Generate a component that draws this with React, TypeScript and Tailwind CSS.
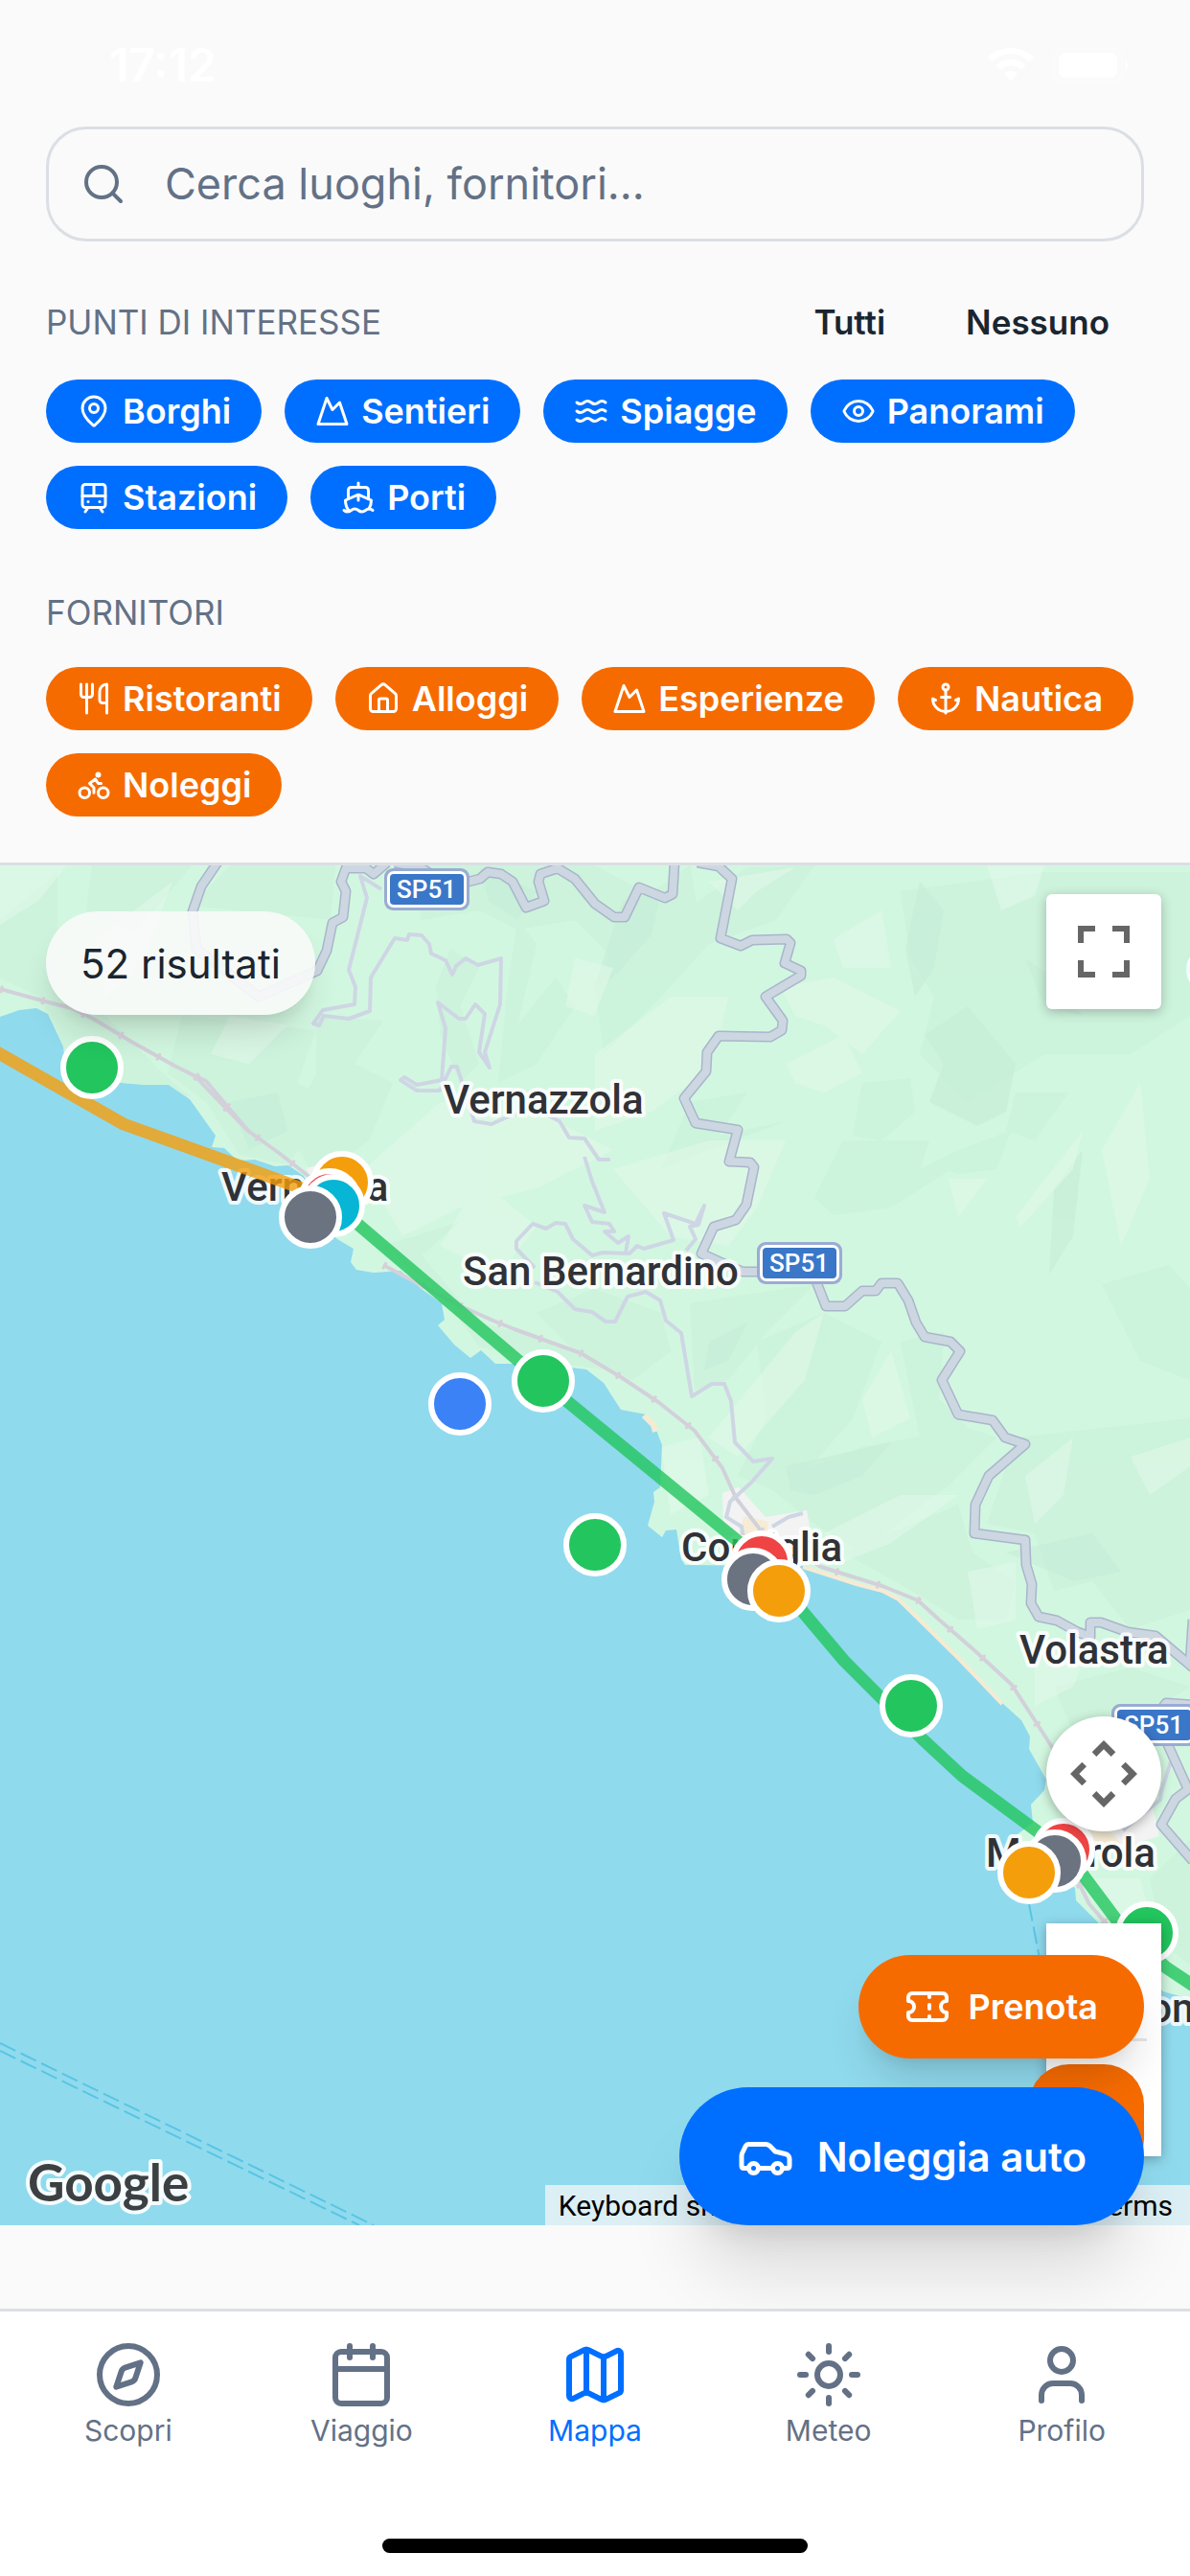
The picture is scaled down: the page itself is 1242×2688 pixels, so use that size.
import type { ReactNode } from "react";
import {
  Anchor, Bike, Calendar, Car, Compass, Eye, House, Map as MapIcon, MapPin, Mountain,
  Search, Ship, Sun, Ticket, TramFront, User, Utensils, Waves, type LucideIcon,
} from "lucide-react";

type Chip = { label: string; Icon: LucideIcon };

const interests: Chip[] = [
  { label: "Borghi", Icon: MapPin },
  { label: "Sentieri", Icon: Mountain },
  { label: "Spiagge", Icon: Waves },
  { label: "Panorami", Icon: Eye },
  { label: "Stazioni", Icon: TramFront },
  { label: "Porti", Icon: Ship },
];

const suppliers: Chip[] = [
  { label: "Ristoranti", Icon: Utensils },
  { label: "Alloggi", Icon: House },
  { label: "Esperienze", Icon: Mountain },
  { label: "Nautica", Icon: Anchor },
  { label: "Noleggi", Icon: Bike },
];

const tabs: (Chip & { active?: boolean })[] = [
  { label: "Scopri", Icon: Compass },
  { label: "Viaggio", Icon: Calendar },
  { label: "Mappa", Icon: MapIcon, active: true },
  { label: "Meteo", Icon: Sun },
  { label: "Profilo", Icon: User },
];

/* Pins on the map canvas, in canvas pixels, back to front. */
const pins: { name: string; x: number; y: number; color: string }[] = [
  { name: "Sentiero Monterosso", x: 96, y: 211, color: "bg-[#22c55e]" },
  { name: "Panorama Vernazza", x: 357, y: 331, color: "bg-[#f59e0b]" },
  { name: "Borgo Vernazza", x: 344, y: 349, color: "bg-[#ef4444]" },
  { name: "Porto Vernazza", x: 348, y: 355, color: "bg-[#06b6d4]" },
  { name: "Stazione Vernazza", x: 324, y: 367, color: "bg-[#6b7280]" },
  { name: "Sentiero Corniglia", x: 567, y: 538, color: "bg-[#22c55e]" },
  { name: "Spiaggia Guvano", x: 480, y: 562, color: "bg-[#3b82f6]" },
  { name: "Sentiero mare", x: 621, y: 709, color: "bg-[#22c55e]" },
  { name: "Borgo Corniglia", x: 795, y: 727, color: "bg-[#ef4444]" },
  { name: "Stazione Corniglia", x: 786, y: 745, color: "bg-[#6b7280]" },
  { name: "Panorama Corniglia", x: 813, y: 757, color: "bg-[#f59e0b]" },
  { name: "Sentiero Manarola", x: 951, y: 877, color: "bg-[#22c55e]" },
  { name: "Borgo Manarola", x: 1110, y: 1027, color: "bg-[#ef4444]" },
  { name: "Stazione Manarola", x: 1101, y: 1039, color: "bg-[#6b7280]" },
  { name: "Panorama Manarola", x: 1074, y: 1051, color: "bg-[#f59e0b]" },
  { name: "Via dell'Amore", x: 1197, y: 1114, color: "bg-[#22c55e]" },
];

const land =
  "0,1061 20,1054 38,1052 50,1058 66,1092 70,1122 100,1130 127,1130 150,1132 176,1132 198,1147 225,1185 221,1197 234,1198 248,1211 266,1210 287,1217 301,1216 317,1227 330,1250 340,1280 352,1293 369,1303 366,1317 372,1325 390,1328 418,1326 440,1345 461,1360 464,1377 457,1383 474,1403 491,1417 502,1409 517,1423 537,1423 596,1427 612,1429 630,1443 648,1471 675,1476 683,1487 691,1508 689,1552 682,1557 683,1567 676,1592 691,1604 695,1597 706,1596 711,1627 715,1633 838,1634 894,1652 921,1659 938,1668 1001,1730 1046,1777 1066,1795 1075,1812 1074,1825 1092,1857 1090,1868 1076,1883 1078,1902 1062,1914 1050,1926 1070,1945 1100,1955 1122,1970 1123,1983 1143,2003 1157,2017 1185,2050 1214,2078 1242,2086 1242,903 0,903";

const darkSlopes = [
  "0,960 60,910 60,1040 110,1060 170,1120 200,1145 150,1132 70,1126 60,1075 40,1040 0,1020",
  "96,903 200,903 140,975 90,950",
  "240,903 350,903 345,960 250,950 200,945",
  "190,1060 330,1075 310,1130 350,1150 300,1215 250,1205 215,1150 175,1120",
  "330,1060 400,1065 370,1110 410,1130 385,1190 330,1230 300,1180 330,1120",
  "430,903 621,903 690,940 640,1000 600,960 540,970 500,950 440,960",
  "470,990 500,1010 480,1050 500,1110 480,1130 460,1080 455,1030",
  "540,960 560,985 540,1070 580,1020 600,1050 560,1110 520,1130 530,1030",
  "400,1300 480,1275 440,1310 500,1380 560,1395 640,1430 560,1420 500,1405 460,1350",
  "621,1030 700,960 780,905 850,903 810,960 740,985 690,1040 630,1100",
  "640,960 720,903 730,960 660,1050 630,1030",
  "720,1150 780,1140 750,1185 820,1170 740,1200 690,1220",
  "900,1130 950,1125 955,1160 920,1190 890,1185",
  "940,930 1090,910 1242,910 1242,1060 1180,1100 1090,1100 1010,1150 960,1100 975,1040 950,1000",
  "880,1190 970,1190 960,1220 1000,1200 1055,1180 1040,1220 1000,1225 990,1222 930,1260 870,1268 850,1250",
  "1060,1140 1115,1140 1080,1190 1050,1180",
  "560,1370 620,1345 690,1370 700,1410 660,1440 600,1410",
  "720,1360 850,1340 800,1390 760,1440 725,1450",
  "790,1400 860,1370 920,1400 890,1480 820,1560 770,1540 800,1480",
  "800,1550 900,1510 1010,1490 1040,1500 990,1550 950,1580 900,1620 850,1590",
  "1060,1500 1242,1480 1242,1680 1180,1700 1140,1650 1100,1660 1080,1600 1030,1590",
  "940,1400 985,1390 980,1460 1010,1490 960,1500",
  "880,1620 1000,1570 1015,1620 1060,1650 1050,1690 1000,1690 960,1665",
  "1100,1760 1180,1740 1242,1760 1180,1800 1130,1830",
  "1200,1960 1242,1920 1242,2050 1215,2030",
  "1150,1340 1220,1320 1242,1345 1242,1440 1190,1420",
];

const deepSlopes = [
  "965,1080 1010,1050 1060,1110 1050,1160 1020,1175 970,1150 985,1110",
  "650,940 690,930 680,975 640,1020 620,1030",
  "960,920 985,950 975,1010 955,1040 945,990",
  "820,1530 930,1505 900,1540 850,1560 825,1555",
  "1050,1620 1140,1600 1170,1640 1120,1650",
  "500,905 560,930 540,960 510,940",
  "240,1150 290,1140 300,1180 260,1200",
  "1070,1000 1100,1020 1130,1060 1090,1050",
  "1100,1240 1130,1200 1120,1290 1095,1330",
  "740,1400 780,1380 760,1420 735,1430",
];

const lightSlopes = [
  "0,903 70,903 40,940 0,965",
  "100,980 180,920 150,1000 110,1040",
  "621,1100 700,1040 760,1040 750,1085 735,1120 680,1160 621,1180",
  "380,1220 460,1150 560,1160 640,1200 560,1240 480,1260 420,1290",
  "500,1230 560,1280 520,1330 460,1300",
  "740,920 830,905 790,930 770,950",
  "815,1030 870,1020 940,1055 900,1100 860,1070 830,1060",
  "820,1110 880,1080 900,1120 860,1140 830,1130",
  "870,980 920,950 930,1010 880,1010",
  "1030,903 1090,903 1080,935 1045,950",
  "1060,1270 1130,1180 1120,1220 1065,1280",
  "990,1230 1030,1230 1000,1270",
  "640,1220 740,1190 820,1190 790,1260 760,1300 700,1290",
  "740,1500 830,1390 860,1370 840,1440 770,1520",
  "860,1600 940,1560 1000,1560 930,1610 880,1630",
  "900,1460 930,1410 950,1480 910,1500",
  "1070,1540 1120,1500 1110,1560 1080,1590",
  "1010,1640 1060,1630 1060,1690 1020,1700",
  "1080,1720 1140,1710 1120,1760 1080,1780",
  "1130,1960 1190,1960 1200,2000 1160,2010",
  "690,1510 730,1500 740,1560 700,1580",
  "240,1060 300,1070 260,1110 220,1100",
  "1150,1200 1190,1130 1200,1230 1170,1300",
  "600,1000 640,1010 620,1060 590,1050",
  "1180,1520 1242,1500 1242,1530 1200,1560",
];

const highways = [
  "227,900 210,925 201,951 205,990 270,1040 331,1013 341,992 347,963 358,957 361,930 356,920 361,906 382,906 390,912 404,900",
  "412,900 440,906 460,918 489,920 501,917 509,910 523,912 535,920 549,947 568,940 562,920 564,912 582,906 600,917 621,943 641,957 652,957 667,926 694,937 702,933 704,900",
  "728,900 750,904 764,917 752,979 773,987 785,981 821,980 825,984 819,1005 836,1013 836,1018 799,1040 817,1065 816,1075 804,1082 750,1081 738,1098 737,1118 714,1146 726,1172 770,1179 761,1212 783,1213 787,1218 779,1257 768,1273 745,1280 732,1308 752,1317 775,1327 850,1327 853,1340 862,1363 882,1363 900,1347 914,1347 920,1339 937,1339 948,1357 956,1380 965,1395 992,1400 1002,1410 983,1440 1000,1476 1036,1482 1049,1500 1070,1507 1032,1540 1018,1570 1017,1600 1070,1607 1071,1633 1077,1653 1076,1673 1084,1687 1103,1691 1125,1703 1138,1708 1138,1693 1149,1693 1177,1703 1206,1707 1245,1740",
  "1245,1690 1242,1735",
  "1200,1800 1217,1777 1245,1779",
  "1214,1810 1240,1867 1227,1877 1212,1904 1245,1942",
];

const lanes = [
  "398,928 376,914 383,937 364,1012 371,1030 370,1048 337,1054 327,1068 333,1070 338,1060 364,1063 386,1055 387,1020 412,979 425,981 427,975 440,976 448,985 450,995 465,1002 472,1017 476,1008 486,1000 499,1007 523,1000 522,1048 506,1098 511,1114 500,1098 506,1058 496,1048 486,1063 479,1063 457,1046 465,1073 461,1127 435,1132 422,1124 418,1127 435,1138 459,1138 471,1113 477,1113 495,1170 513,1173 535,1163 560,1158 584,1170 594,1187 610,1188 625,1210 637,1210",
  "610,1207 618,1233 631,1265 610,1258 618,1275 636,1277 641,1285 631,1285 645,1297 656,1290 653,1307",
  "558,1323 539,1303 539,1295 556,1277 570,1282 580,1276 590,1277 598,1293 618,1310 629,1307 657,1308 665,1300 672,1303 703,1294 693,1266 726,1277 735,1258 729,1278 720,1280 726,1293 716,1305",
  "558,1338 582,1348 600,1366 618,1369 632,1379 642,1379 655,1353 674,1348 689,1357 695,1378 711,1391 722,1457 743,1444 756,1444 763,1462 767,1505 786,1525 806,1522 784,1547 762,1567 758,1583 774,1593 776,1605",
  "806,1593 823,1583 838,1579",
  "1222,1838 1212,1870 1211,1878 1190,1895 1172,1910",
];

const railways = [
  "0,1032 51,1046 75,1052 97,1063 139,1088 182,1112 204,1123 218,1138 259,1180 291,1203 323,1228",
  "204,1123 215,1128 259,1180",
  "400,1320 479,1362 517,1379 537,1387 606,1412 648,1437 687,1463 725,1493 754,1532 768,1563 794,1597 857,1635 921,1655 958,1670 980,1690 1018,1723 1056,1758 1098,1823 1120,1860 1125,1920 1127,1967 1137,1987 1157,2010",
];

const places: [string, number, number][] = [
  ["Vernazzola", 463, 1162],
  ["Vernazza", 231, 1253],
  ["San Bernardino", 483, 1341],
  ["Corniglia", 711, 1629],
  ["Volastra", 1064, 1736],
  ["Manarola", 1029, 1948],
  ["Riomaggiore", 1162, 2110],
  ["G", 1240, 1027],
];

const shields: [number, number][] = [[401, 906], [790, 1296], [1160, 1778]];

function Lines({ set, stroke, width, dash }: { set: string[]; stroke: string; width: number; dash?: string }) {
  return (
    <g fill="none" stroke={stroke} strokeWidth={width} strokeLinejoin="round" strokeDasharray={dash}>
      {set.map((p) => <polyline key={p} points={p} />)}
    </g>
  );
}

function Terrain() {
  return (
    <svg className="absolute inset-0 h-full w-full" viewBox="0 903 1242 1419" aria-hidden="true">
      <defs>
        <clipPath id="land"><polygon points={land} /></clipPath>
      </defs>
      <rect x="0" y="903" width="1242" height="1419" fill="#90daee" />
      <polygon points={land} fill="#d2f7e1" />
      <g clipPath="url(#land)">
        <g fill="#c8f0d9" opacity="0.55">{darkSlopes.map((p) => <polygon key={p} points={p} />)}</g>
        <g fill="#c6edd7" opacity="0.6">{deepSlopes.map((p) => <polygon key={p} points={p} />)}</g>
        <g fill="#e2f9e9" opacity="0.6">{lightSlopes.map((p) => <polygon key={p} points={p} />)}</g>
      </g>
      <polyline points="838,1635 894,1653 921,1660 938,1669 1001,1731 1046,1778" fill="none" stroke="#f5ebd2" strokeWidth="4" />
      <polyline points="672,1477 682,1487 684,1494" fill="none" stroke="#f5ebd2" strokeWidth="6" />
      <polygon points="320,1219 334,1215 350,1232 326,1236" fill="#f3f2f2" />
      <polygon points="754,1558 771,1552 799,1583 842,1576 847,1606 773,1606 755,1590" fill="#f3f3f3" />
      <polygon points="776,1583 786,1584 802,1588 800,1606 770,1606" fill="#f6ecd6" />
      <polygon points="1137,1905 1203,1885 1210,1916 1176,1926 1140,1930" fill="#f3f3f3" />
      <polygon points="1137,1908 1160,1912 1170,1924 1145,1926" fill="#f6ecd6" />

      <Lines set={railways} stroke="#d2d1da" width={4} />
      <Lines set={railways} stroke="#d8cfda" width={8} dash="3 42" />
      <Lines set={lanes} stroke="#ced6e4" width={4} />
      <Lines set={highways} stroke="#a9b5cb" width={11} />
      <Lines set={highways} stroke="#cdd7e2" width={8} />

      <Lines set={["0,2132 390,2322", "0,2140 375,2322", "1074,1987 1100,2120"]} stroke="#58c5e3" width={2} dash="18 6" />

      <g fontFamily="Roboto, sans-serif" fontWeight="500">
        {shields.map(([x, y]) => (
          <g key={x}>
            <rect x={x} y={y} width="89" height="44" rx="9" fill="#9aacd2" />
            <rect x={x + 3} y={y + 3} width="83" height="38" rx="7" fill="#fff" />
            <rect x={x + 6} y={y + 6} width="77" height="32" rx="4" fill="#3a77c8" />
            <text x={x + 44} y={y + 31} textAnchor="middle" fontSize="26" fill="#fff">SP51</text>
          </g>
        ))}
        {places.map(([name, x, y]) => (
          <text key={name} x={x} y={y} fontSize="42" fill="#303237" stroke="#ffffff" strokeOpacity="0.85" strokeWidth="8" strokeLinejoin="round" paintOrder="stroke">
            {name}
          </text>
        ))}
      </g>

      <g fill="none" strokeWidth="13" strokeOpacity="0.8" strokeLinejoin="round">
        <polyline stroke="#f59e0b" points="-10,1094 129,1173 340,1249" />
        <polyline stroke="#22c55e" points="340,1249 566,1441 770,1608 805,1642 838,1682 881,1733 921,1773 963,1815 1004,1853 1084,1912 1115,1936 1168,2007 1217,2053 1250,2075" />
      </g>
    </svg>
  );
}

function Filters({ chips, tone }: { chips: Chip[]; tone: "blue" | "orange" }) {
  return (
    <div className="flex flex-wrap gap-6">
      {chips.map(({ label, Icon }) => (
        <button
          key={label}
          type="button"
          aria-pressed="true"
          className={`flex h-[66px] items-center gap-3 rounded-full px-8 text-[36px] leading-none font-semibold text-white ${tone === "blue" ? "bg-[#006fff]" : "bg-[#f66b00]"}`}
        >
          <Icon className="size-9" strokeWidth={2} aria-hidden="true" />
          {label}
        </button>
      ))}
    </div>
  );
}

function StatusBar() {
  return (
    <div className="flex h-[132px] items-center justify-between pt-1 pr-[63px] pl-[114px] text-white">
      <span className="text-[48px] leading-none font-semibold">17:12</span>
      <div className="flex items-center gap-5" aria-hidden="true">
        <svg className="h-9 w-12" viewBox="0 0 48 36" fill="#fff">
          <path d="M24 0C14.500 0 6 3.700 0 9.700l4.500 4.600C9.500 9.300 16.400 6.300 24 6.300s14.500 3 19.500 8l4.500-4.600C42 3.700 33.500 0 24 0z" />
          <path d="M24 12c-6 0-11.500 2.400-15.500 6.400l4.600 4.600c2.800-2.800 6.600-4.500 10.900-4.500s8.100 1.700 10.900 4.500l4.600-4.600C35.500 14.400 30 12 24 12z" />
          <path d="M24 24c-2.700 0-5.200 1.100-7 2.900l7 7.600 7-7.600c-1.800-1.800-4.300-2.900-7-2.900z" />
        </svg>
        <svg className="h-10 w-20" viewBox="0 0 80 40">
          <rect x="1" y="2" width="71" height="36" rx="11" fill="none" stroke="#fff" strokeOpacity="0.3" strokeWidth="3" />
          <rect x="6" y="7" width="61" height="26" rx="7" fill="#fff" />
          <path d="M75 14q4 2 4 6t-4 6z" fill="#fff" fillOpacity="0.5" />
        </svg>
      </div>
    </div>
  );
}

function MapControl({ label, className, children }: { label: string; className: string; children?: ReactNode }) {
  return (
    <button type="button" aria-label={label} className={`flex size-[120px] items-center justify-center bg-white text-[#666666] ${className}`}>
      {children}
    </button>
  );
}

function MapView() {
  return (
    <section aria-label="Mappa" className="relative min-h-[900px] flex-1">
      <div className="absolute inset-0 overflow-hidden bg-[#90daee]">
        <div className="absolute top-0 left-1/2 h-[1419px] w-[1242px] -translate-x-1/2">
          <Terrain />
          {pins.map(({ name, x, y, color }) => (
            <button
              key={name}
              type="button"
              aria-label={name}
              className={`absolute size-[66px] -translate-1/2 rounded-full border-6 border-white ${color}`}
              style={{ left: x, top: y }}
            />
          ))}
        </div>

        <MapControl label="Schermo intero" className="absolute top-[30px] right-[30px] rounded-md shadow-[0_3px_12px_rgba(0,0,0,0.25)]">
          <svg className="size-[54px]" viewBox="0 0 18 18" fill="currentColor" aria-hidden="true">
            <path d="M0 0v6h2V2h4V0H0zm16 0h-4v2h4v4h2V0h-2zm0 16h-4v2h6v-6h-2v4zM2 12H0v6h6v-2H2v-4z" />
          </svg>
        </MapControl>
        <MapControl label="Controlli della mappa" className="absolute right-[30px] bottom-[411px] rounded-full shadow-[0_3px_12px_rgba(0,0,0,0.3)]">
          <svg className="size-[120px]" viewBox="-60 -60 120 120" fill="currentColor" aria-hidden="true">
            {[0, 90, 180, 270].map((a) => (
              <path key={a} transform={`rotate(${a})`} d="M0-35 12.300-22.700 7.700-18 0-25.700-7.700-18-12.300-22.700z" />
            ))}
          </svg>
        </MapControl>
        <div className="absolute right-[30px] bottom-[72px] flex flex-col items-center bg-white shadow-[0_3px_12px_rgba(0,0,0,0.3)]">
          <MapControl label="Ingrandisci" className="" />
          <div className="h-[3px] w-[90px] bg-[#e6e6e6]" />
          <MapControl label="Riduci" className="" />
        </div>

        <svg className="absolute bottom-0 left-6 h-[72px] w-[192px]" viewBox="0 0 192 72" role="img" aria-label="Google">
          <text x="5" y="47" fontFamily="Lato, sans-serif" fontSize="53" fontWeight="700" fill="#3c4043" stroke="#ffffff" strokeOpacity="0.9" strokeWidth="8" strokeLinejoin="round" paintOrder="stroke">
            Google
          </text>
        </svg>
        <div className="absolute right-0 bottom-0 flex h-[42px] items-center gap-[36px] bg-[#f5f5f5]/75 pr-[18px] pl-[14px] font-[Roboto,sans-serif] text-[30px] whitespace-nowrap text-black">
          <button type="button">Keyboard shortcuts</button>
          <span>Map data ©2026</span>
          <a href="#terms">Terms</a>
        </div>
      </div>

      <div className="absolute top-12 left-12 flex h-[108px] items-center rounded-full bg-[#fafafa]/90 px-9 text-[42px] text-[#1b2530] shadow-[0_24px_36px_-9px_rgba(0,0,0,0.14),0_12px_18px_-12px_rgba(0,0,0,0.12)]">
        52 risultati
      </div>

      <button type="button" aria-label="Itinerario" className="absolute right-12 bottom-12 size-[120px] rounded-[42px] bg-[#f66b00]" />
      <button type="button" className="absolute right-12 bottom-[174px] flex h-[108px] items-center gap-[18px] rounded-full bg-[#f66b00] px-12 text-[36px] font-semibold text-white shadow-[0_30px_45px_-9px_rgba(0,0,0,0.14),0_12px_18px_-12px_rgba(0,0,0,0.12)]">
        <Ticket className="size-12" aria-hidden="true" />
        Prenota
      </button>
      <button type="button" className="absolute right-12 bottom-0 flex h-[144px] items-center gap-6 rounded-full bg-[#006fff] px-[60px] text-[42px] font-semibold text-white shadow-[0_60px_75px_-15px_rgba(0,0,0,0.13),0_24px_30px_-18px_rgba(0,0,0,0.12)]">
        <Car className="size-[60px]" aria-hidden="true" />
        Noleggia auto
      </button>
    </section>
  );
}

export default function App() {
  return (
    <div className="flex min-h-screen flex-col bg-[#fafafa] font-[Inter,sans-serif] text-[#1b2530]">
      <header className="border-b-3 border-[#dbdfe4] pb-12">
        <StatusBar />
        <div className="px-12">
          <label className="flex h-[120px] items-center gap-10 rounded-[42px] border-3 border-[#dbdfe4] px-[33px] text-[#637186]">
            <Search className="size-12 shrink-0" aria-hidden="true" />
            <input
              type="search"
              aria-label="Cerca"
              placeholder="Cerca luoghi, fornitori..."
              className="min-w-0 flex-1 bg-transparent text-[45px] outline-none placeholder:text-[#637186]"
            />
          </label>

          <div className="mt-9 mb-3 flex h-24 items-center justify-between">
            <h2 className="text-[35px] text-[#637186]">PUNTI DI INTERESSE</h2>
            <div className="flex gap-3 text-[35px] font-semibold">
              <button type="button" className="h-24 px-9">Tutti</button>
              <button type="button" className="h-24 px-9">Nessuno</button>
            </div>
          </div>
          <Filters chips={interests} tone="blue" />

          <h2 className="mt-[60px] mb-[30px] text-[35px] leading-[54px] text-[#637186]">FORNITORI</h2>
          <Filters chips={suppliers} tone="orange" />
        </div>
      </header>

      <MapView />

      <div className="h-[87px]" />

      <nav className="relative flex h-[279px] flex-col justify-between border-t-3 border-[#dbdfe4] bg-white">
        <div className="grid grid-cols-5 px-3 pt-[30px]">
          {tabs.map(({ label, Icon, active }) => (
            <a
              key={label}
              href={`#${label.toLowerCase()}`}
              aria-current={active ? "page" : undefined}
              className={`flex flex-col items-center gap-1 text-[30px] leading-9 ${active ? "text-[#006fff]" : "text-[#637186]"}`}
            >
              <Icon className="size-[72px]" aria-hidden="true" />
              {label}
            </a>
          ))}
        </div>
        <div className="mb-6 h-[15px] w-[444px] self-center rounded-full bg-black" />
      </nav>
    </div>
  );
}
